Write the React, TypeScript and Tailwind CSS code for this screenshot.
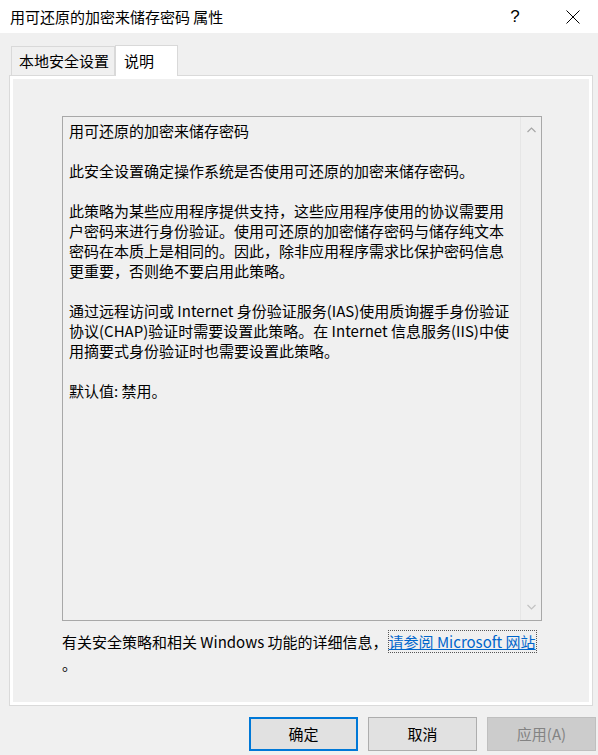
import React from "react";

const font = { fontFamily: '"Noto Sans CJK SC", "Noto Sans", sans-serif' };

const lines: string[] = [
  "用可还原的加密来储存密码",
  "",
  "此安全设置确定操作系统是否使用可还原的加密来储存密码。",
  "",
  "此策略为某些应用程序提供支持，这些应用程序使用的协议需要用",
  "户密码来进行身份验证。使用可还原的加密储存密码与储存纯文本",
  "密码在本质上是相同的。因此，除非应用程序需求比保护密码信息",
  "更重要，否则绝不要启用此策略。",
  "",
  "通过远程访问或 Internet 身份验证服务(IAS)使用质询握手身份验证",
  "协议(CHAP)验证时需要设置此策略。在 Internet 信息服务(IIS)中使",
  "用摘要式身份验证时也需要设置此策略。",
  "",
  "默认值: 禁用。",
];

export default function App() {
  return (
    <div
      className="w-[598px] h-[755px] bg-[#f0f0f0] flex flex-col overflow-hidden text-[15px] text-black"
      style={font}
    >
      {/* Title bar */}
      <div className="h-[33px] bg-white flex items-center shrink-0">
        <div className="pl-[10px] flex-1 leading-[20px]">用可还原的加密来储存密码 属性</div>
        <div
          className="w-[20px] text-center text-[17px] leading-[20px] mr-[41px]"
          style={{ fontFamily: '"Liberation Sans", sans-serif' }}
        >
          ?
        </div>
        <div className="w-[14px] h-[14px] mr-[18px]">
          <svg width="14" height="14" viewBox="0 0 14 14">
            <path d="M0.5 0.5 L13.5 13.5 M13.5 0.5 L0.5 13.5" stroke="#000" strokeWidth="1" />
          </svg>
        </div>
      </div>

      {/* Tabs */}
      <div className="mt-[11px] pl-[11px] flex items-end h-[31px] shrink-0">
        <div className="h-[29px] w-[104px] border border-b-0 border-[#d9d9d9] bg-[#f0f0f0] flex items-center pl-[7px] leading-[20px]">
          本地安全设置
        </div>
        <div className="h-[31px] w-[63px] border border-b-0 border-[#d9d9d9] bg-white flex items-center pl-[8px] leading-[20px] relative z-10 -mb-[1px]">
          说明
        </div>
      </div>

      {/* Panel */}
      <div className="ml-[9px] w-[584px] h-[631px] border border-[#dadada] shrink-0">
        <div className="w-full h-full border-[3px] border-white bg-[#f0f0f0] pl-[49px] pt-[37px] flex flex-col">
          <div className="w-[480px] h-[505px] border border-[#a8a8a8] flex">
            <div className="flex-1 pl-[6px] pt-[4px]">
              {lines.map((l, i) => (
                <div key={i} className="h-[20px] leading-[20px] whitespace-nowrap">
                  {l}
                </div>
              ))}
            </div>
            <div className="w-[21px] border-l border-[#e6e6e6] flex flex-col justify-between items-center py-[10px]">
              <svg width="9" height="6" viewBox="0 0 9 6">
                <path d="M0.5 5 L4.5 1 L8.5 5" stroke="#a6a6a6" strokeWidth="1.2" fill="none" />
              </svg>
              <svg width="9" height="6" viewBox="0 0 9 6">
                <path d="M0.5 1 L4.5 5 L8.5 1" stroke="#c2c2c2" strokeWidth="1.2" fill="none" />
              </svg>
            </div>
          </div>
          <div className="mt-[11px] leading-[20px] whitespace-nowrap">
            <span>有关安全策略和相关 Windows 功能的详细信息，</span>
            <span className="text-[#0066cc] underline outline outline-1 outline-dotted outline-[#555] ml-[1px]">
              请参阅 Microsoft 网站
            </span>
          </div>
          <div className="leading-[20px] mt-[2px]">。</div>
        </div>
      </div>

      {/* Buttons */}
      <div className="flex mt-[11px] pl-[249px] gap-[10px]">
        <button
          className="w-[109px] h-[34px] bg-[#e1e1e1] border border-[#0078d7] shadow-[inset_0_0_0_1px_#0078d7] flex items-center justify-center"
          style={font}
        >
          确定
        </button>
        <button
          className="w-[109px] h-[34px] bg-[#e1e1e1] border border-[#adadad] flex items-center justify-center"
          style={font}
        >
          取消
        </button>
        <button
          className="w-[109px] h-[34px] bg-[#cccccc] border border-[#bfbfbf] text-[#838383] flex items-center justify-center"
          style={font}
        >
          应用(A)
        </button>
      </div>
    </div>
  );
}
